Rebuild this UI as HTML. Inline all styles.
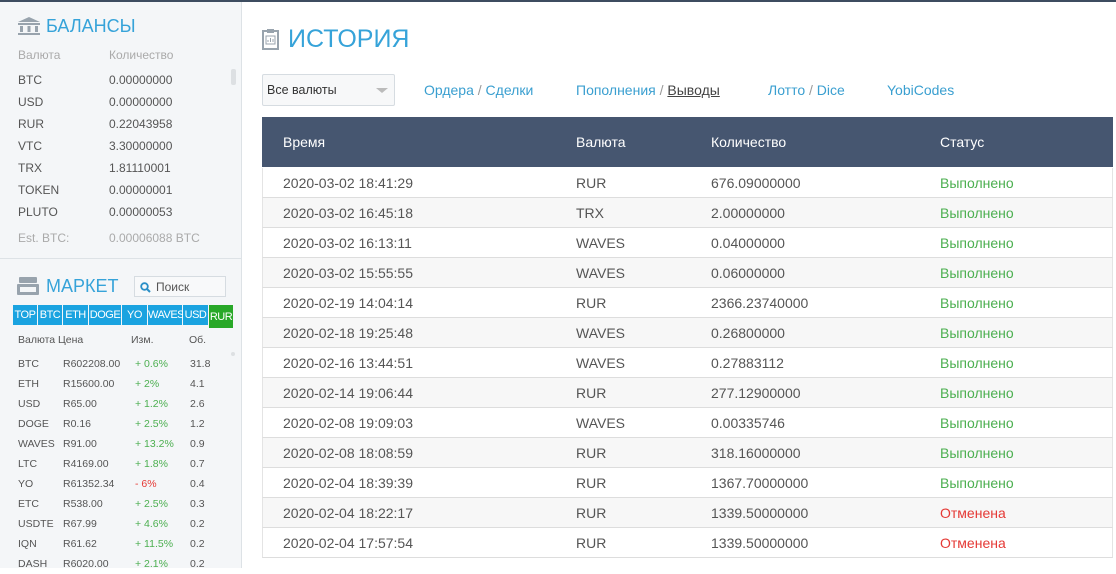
<!DOCTYPE html>
<html><head><meta charset="utf-8"><style>
*{margin:0;padding:0;box-sizing:border-box}
body{width:1116px;height:568px;overflow:hidden;background:#fff;font-family:"Liberation Sans",sans-serif;position:relative;color:#555}
.top{position:absolute;left:0;top:0;width:1116px;height:2px;background:#3d4c60}
.side{position:absolute;left:0;top:2px;width:242px;height:566px;background:#f4f6f8;border-right:1px solid #dde2e6}
.a{position:absolute;white-space:nowrap}
.h{color:#36a3d9;font-size:18px}
.bl{font-size:12px;color:#555}
.gr{color:#aaa}
.tab{position:absolute;top:305px;height:20px;background:#1aa3e0;color:#fff;font-size:11px;text-align:center;line-height:20px;letter-spacing:-0.5px}
.mk{font-size:10.5px;color:#555}
.g{color:#4caf50}.r{color:#e53935}
.tbl{position:absolute;left:262px;top:117px;width:851px}
.th{height:51px;background:#465670;color:#fff;font-size:14px;position:relative;border-bottom:1px solid #fff}
.tr{height:30px;border-bottom:1px solid #ddd;position:relative;font-size:14px;color:#555;border-left:1px solid #e4e4e4;border-right:1px solid #e4e4e4}
.c1,.c2,.c3,.c4{position:absolute;top:50%;transform:translateY(-50%);white-space:nowrap}
.c1{left:20px}.c2{left:313px}.c3{left:448px}.c4{left:677px}
.ok{color:#4caf50}.no{color:#e53935}
.lk{color:#3a9fd0;font-size:14px}
</style></head><body>
<div class="top"></div>
<div class="side">
<svg class="a" style="left:17px;top:14px" width="24" height="20" viewBox="0 0 24 20"><path d="M12 1L1 6h22z" fill="#98a3ad"/><rect x="1" y="7" width="22" height="2" fill="#98a3ad"/><rect x="3" y="10" width="3" height="6" fill="#98a3ad"/><rect x="10.5" y="10" width="3" height="6" fill="#98a3ad"/><rect x="18" y="10" width="3" height="6" fill="#98a3ad"/><rect x="1" y="17" width="22" height="2" fill="#98a3ad"/></svg>
<div class="a h" style="left:46px;top:14px">БАЛАНСЫ</div>
<div class="a bl gr" style="left:18px;top:46px">Валюта</div><div class="a bl gr" style="left:109px;top:46px">Количество</div>
<div class="a bl" style="left:18px;top:67px;line-height:22px">BTC<br>USD<br>RUR<br>VTC<br>TRX<br>TOKEN<br>PLUTO</div>
<div class="a bl" style="left:109px;top:67px;line-height:22px">0.00000000<br>0.00000000<br>0.22043958<br>3.30000000<br>1.81110001<br>0.00000001<br>0.00000053</div>
<div style="position:absolute;left:231px;top:67px;width:5px;height:16px;background:#dde0e3;border-radius:2px"></div>
<div class="a bl gr" style="left:18px;top:229px">Est. BTC:</div><div class="a bl gr" style="left:109px;top:229px">0.00006088 BTC</div>
<div style="position:absolute;left:0;top:256px;width:241px;height:1px;background:#dde2e6"></div>
<svg class="a" style="left:17px;top:275px" width="22" height="18" viewBox="0 0 22 18"><rect x="2" y="0" width="18" height="6" rx="1" fill="#98a3ad"/><rect x="0" y="7" width="22" height="11" rx="1" fill="#98a3ad"/><rect x="3" y="10" width="16" height="5" fill="#f4f6f8"/></svg>
<div class="a h" style="left:46px;top:274px">МАРКЕТ</div>
<div style="position:absolute;left:134px;top:274px;width:92px;height:21px;border:1px solid #d6dce1;background:#f8f9fa"></div>
<svg class="a" style="left:140px;top:280px" width="11" height="11" viewBox="0 0 11 11"><circle cx="4.5" cy="4.5" r="3.3" fill="none" stroke="#2a8fc7" stroke-width="1.8"/><path d="M7 7l3 3" stroke="#2a8fc7" stroke-width="2"/></svg>
<div class="a" style="left:156px;top:278px;font-size:12px;color:#555">Поиск</div>
</div>
<div class="tab" style="left:13px;width:24px">TOP</div>
<div class="tab" style="left:38px;width:24px">BTC</div>
<div class="tab" style="left:63px;width:25px">ETH</div>
<div class="tab" style="left:89px;width:32px">DOGE</div>
<div class="tab" style="left:122px;width:25px">YO</div>
<div class="tab" style="left:148px;width:34px">WAVES</div>
<div class="tab" style="left:183px;width:25px">USD</div>
<div class="tab" style="left:209px;width:24px;height:23px;background:#28a828;line-height:24px">RUR</div>
<div class="a mk gr" style="left:18px;top:334px">Валюта</div><div class="a mk gr" style="left:58px;top:334px">Цена</div><div class="a mk gr" style="left:131px;top:334px">Изм.</div><div class="a mk gr" style="left:189px;top:334px">Об.</div>
<div style="position:absolute;left:231px;top:352px;width:4px;height:4px;background:#dde0e3;border-radius:2px"></div>
<div class="a mk" style="left:18px;top:354px;line-height:20px">BTC<br>ETH<br>USD<br>DOGE<br>WAVES<br>LTC<br>YO<br>ETC<br>USDTE<br>IQN<br>DASH</div>
<div class="a mk" style="left:63px;top:354px;line-height:20px">R602208.00<br>R15600.00<br>R65.00<br>R0.16<br>R91.00<br>R4169.00<br>R61352.34<br>R538.00<br>R67.99<br>R61.62<br>R6020.00</div>
<div class="a mk g" style="left:135px;top:354px;line-height:20px">+ 0.6%<br>+ 2%<br>+ 1.2%<br>+ 2.5%<br>+ 13.2%<br>+ 1.8%<br><span class="r">- 6%</span><br>+ 2.5%<br>+ 4.6%<br>+ 11.5%<br>+ 2.1%</div>
<div class="a mk" style="left:190px;top:354px;line-height:20px">31.8<br>4.1<br>2.6<br>1.2<br>0.9<br>0.7<br>0.4<br>0.3<br>0.2<br>0.2<br>0.2</div>

<svg class="a" style="left:262px;top:29px" width="17" height="21" viewBox="0 0 17 21"><rect x="1" y="2" width="15" height="18" fill="none" stroke="#98a3ad" stroke-width="2"/><rect x="5" y="0" width="7" height="4" fill="#98a3ad"/><rect x="4" y="7" width="9" height="8" fill="none" stroke="#98a3ad" stroke-width="1"/><path d="M6 13v-2M8.5 13v-4M11 13v-3" stroke="#98a3ad"/></svg>
<div class="a" style="left:288px;top:25px;font-size:25px;color:#36a3d9">ИСТОРИЯ</div>
<div style="position:absolute;left:262px;top:74px;width:133px;height:32px;border:1px solid #d6dce1;background:#f7f8f9;border-radius:2px"></div>
<div class="a" style="left:267px;top:83px;font-size:12.5px;color:#333">Все валюты</div>
<div class="a" style="left:376px;top:88px;width:0;height:0;border-left:6px solid transparent;border-right:6px solid transparent;border-top:5px solid #bbb"></div>
<div class="a lk" style="left:424px;top:82px">Ордера <span style="color:#999">/</span> Сделки</div>
<div class="a lk" style="left:576px;top:82px">Пополнения <span style="color:#999">/</span> <span style="color:#444;text-decoration:underline">Выводы</span></div>
<div class="a lk" style="left:768px;top:82px">Лотто <span style="color:#999">/</span> Dice</div>
<div class="a lk" style="left:887px;top:82px">YobiCodes</div>

<div class="tbl">
<div class="th"><span class="c1" style="left:21px">Время</span><span class="c2" style="left:314px">Валюта</span><span class="c3" style="left:449px">Количество</span><span class="c4" style="left:678px">Статус</span></div>
<div>
<div class="tr" style="background:#fff"><span class="c1">2020-03-02 18:41:29</span><span class="c2">RUR</span><span class="c3">676.09000000</span><span class="c4 ok">Выполнено</span></div>
<div class="tr" style="background:#f7f7f7"><span class="c1">2020-03-02 16:45:18</span><span class="c2">TRX</span><span class="c3">2.00000000</span><span class="c4 ok">Выполнено</span></div>
<div class="tr" style="background:#fff"><span class="c1">2020-03-02 16:13:11</span><span class="c2">WAVES</span><span class="c3">0.04000000</span><span class="c4 ok">Выполнено</span></div>
<div class="tr" style="background:#f7f7f7"><span class="c1">2020-03-02 15:55:55</span><span class="c2">WAVES</span><span class="c3">0.06000000</span><span class="c4 ok">Выполнено</span></div>
<div class="tr" style="background:#fff"><span class="c1">2020-02-19 14:04:14</span><span class="c2">RUR</span><span class="c3">2366.23740000</span><span class="c4 ok">Выполнено</span></div>
<div class="tr" style="background:#f7f7f7"><span class="c1">2020-02-18 19:25:48</span><span class="c2">WAVES</span><span class="c3">0.26800000</span><span class="c4 ok">Выполнено</span></div>
<div class="tr" style="background:#fff"><span class="c1">2020-02-16 13:44:51</span><span class="c2">WAVES</span><span class="c3">0.27883112</span><span class="c4 ok">Выполнено</span></div>
<div class="tr" style="background:#f7f7f7"><span class="c1">2020-02-14 19:06:44</span><span class="c2">RUR</span><span class="c3">277.12900000</span><span class="c4 ok">Выполнено</span></div>
<div class="tr" style="background:#fff"><span class="c1">2020-02-08 19:09:03</span><span class="c2">WAVES</span><span class="c3">0.00335746</span><span class="c4 ok">Выполнено</span></div>
<div class="tr" style="background:#f7f7f7"><span class="c1">2020-02-08 18:08:59</span><span class="c2">RUR</span><span class="c3">318.16000000</span><span class="c4 ok">Выполнено</span></div>
<div class="tr" style="background:#fff"><span class="c1">2020-02-04 18:39:39</span><span class="c2">RUR</span><span class="c3">1367.70000000</span><span class="c4 ok">Выполнено</span></div>
<div class="tr" style="background:#f7f7f7"><span class="c1">2020-02-04 18:22:17</span><span class="c2">RUR</span><span class="c3">1339.50000000</span><span class="c4 no">Отменена</span></div>
<div class="tr" style="background:#fff"><span class="c1">2020-02-04 17:57:54</span><span class="c2">RUR</span><span class="c3">1339.50000000</span><span class="c4 no">Отменена</span></div>
</div></div>
</body></html>
